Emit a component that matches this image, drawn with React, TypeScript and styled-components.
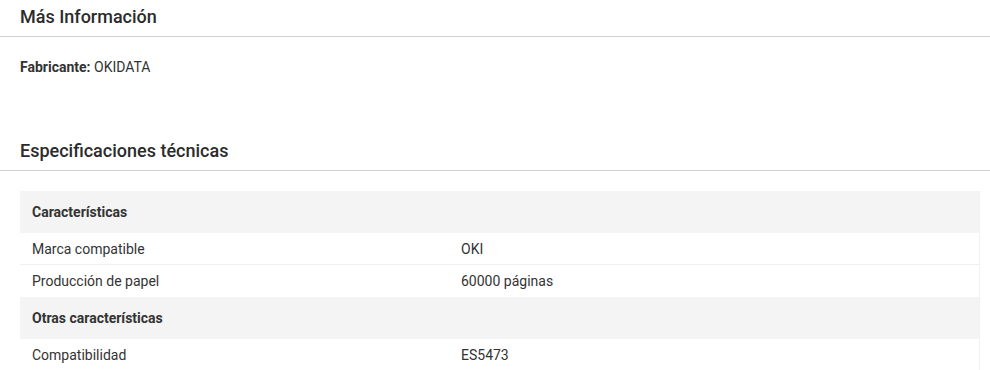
import styled, {createGlobalStyle} from 'styled-components';

type SpecRow = {label: string; value?: string; group?: boolean};

const specs: SpecRow[] = [
    {label: 'Características', group: true},
    {label: 'Marca compatible', value: 'OKI'},
    {label: 'Producción de papel', value: '60000 páginas'},
    {label: 'Otras características', group: true},
    {label: 'Compatibilidad', value: 'ES5473'},
];

const App = () => {
    return (
        <>
            <GlobalStyle />
            <Page>
                <BlockTitle>Más Información</BlockTitle>
                <Attribute>
                    <strong>Fabricante:</strong> OKIDATA
                </Attribute>

                <BlockTitle $spaced>Especificaciones técnicas</BlockTitle>
                <SpecTable>
                    {specs.map((row, index) => {
                        const next = specs[index + 1];
                        return row.group ? (
                            <GroupRow key={row.label}>{row.label}</GroupRow>
                        ) : (
                            <Row key={row.label} $divider={!!next && !next.group}>
                                <Cell>{row.label}</Cell>
                                <Cell>{row.value}</Cell>
                            </Row>
                        );
                    })}
                </SpecTable>
            </Page>
        </>
    );
};

export default App;

const GlobalStyle = createGlobalStyle`
    body {
        margin: 0;
        background: #ffffff;
        font-family: Roboto, "Liberation Sans", Arial, sans-serif;
        color: #333333;
    }
`;

const Page = styled.main`
    width: 990px;
    height: 370px;
    overflow: hidden;
`;

const BlockTitle = styled.h2<{$spaced?: boolean}>`
    margin: ${p => (p.$spaced ? '57px' : '0')} 0 0;
    padding: 6px 20px 8px;
    font-size: 18px;
    line-height: 22px;
    font-weight: 500;
    color: #2b2b2b;
    border-bottom: 1px solid #d1d1d1;
`;

const Attribute = styled.p`
    margin: 20px 0 0;
    padding: 0 20px;
    font-size: 14px;
    line-height: 20px;

    strong {
        font-weight: 700;
    }
`;

const SpecTable = styled.div`
    margin: 20px 10px 0 20px;
    border-right: 1px solid #f2f2f2;
    font-size: 14px;
`;

const GroupRow = styled.div`
    height: 42px;
    display: flex;
    align-items: center;
    padding: 0 12px;
    background: #f4f4f4;
    font-weight: 700;
`;

const Row = styled.div<{$divider: boolean}>`
    display: grid;
    grid-template-columns: 429px 1fr;
    height: 32px;
    box-sizing: border-box;
    border-bottom: 1px solid ${p => (p.$divider ? '#efefef' : 'transparent')};
`;

const Cell = styled.div`
    display: flex;
    align-items: center;
    padding: 0 12px;
`;
